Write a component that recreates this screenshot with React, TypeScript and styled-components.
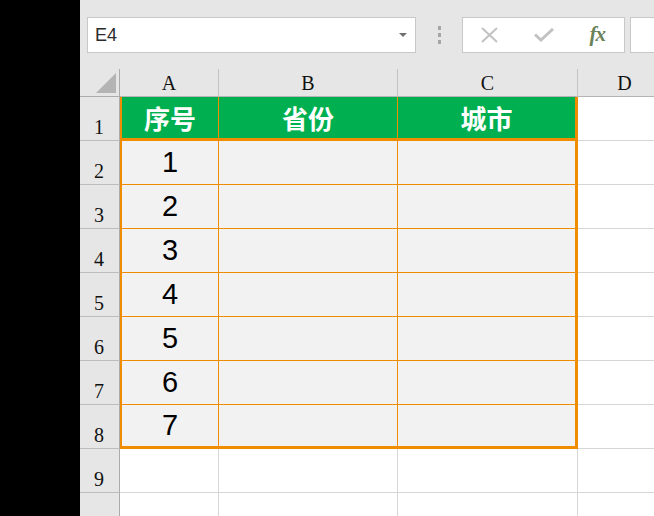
import React from "react";
import styled, { createGlobalStyle, css } from "styled-components";

const ORANGE = "#ef8c00";
const GRID = "#d6d6d6";
const HEAD_BG = "#e6e6e6";

const GlobalStyle = createGlobalStyle`
  html, body {
    margin: 0;
    padding: 0;
    background: #000;
  }
  body {
    width: 654px;
    height: 516px;
    overflow: hidden;
    font-family: "Liberation Sans", Arial, sans-serif;
  }
`;

const PageEl = styled.div`
  display: flex;
  width: 654px;
  height: 516px;
  overflow: hidden;
`;

const SideEl = styled.div`
  width: 80px;
  flex-shrink: 0;
  background: #000;
`;

const MainEl = styled.div`
  flex: 1;
  display: flex;
  flex-direction: column;
  background: #fff;
  overflow: hidden;
`;

const ToolbarEl = styled.div`
  height: 69px;
  flex-shrink: 0;
  box-sizing: border-box;
  padding: 17px 0 0 7px;
  background: ${HEAD_BG};
  display: flex;
  align-items: flex-start;
  gap: 0;
`;

const BoxEl = styled.div<{ $width: number; $gap?: number }>`
  width: ${(p) => p.$width}px;
  height: 36px;
  margin-left: ${(p) => p.$gap ?? 0}px;
  box-sizing: border-box;
  flex-shrink: 0;
  border: 1px solid #c8c8c8;
  background: #fff;
  display: flex;
  align-items: center;
`;

const NameTextEl = styled.span`
  flex: 1;
  padding-left: 7px;
  font-size: 18px;
  color: #2b2b2b;
`;

const ArrowEl = styled.span`
  width: 0;
  height: 0;
  margin-right: 8px;
  border-left: 4px solid transparent;
  border-right: 4px solid transparent;
  border-top: 4px solid #707070;
`;

const DotsEl = styled.div`
  width: 46px;
  height: 36px;
  flex-shrink: 0;
  display: flex;
  flex-direction: column;
  align-items: center;
  justify-content: center;
  gap: 3px;
`;

const DotEl = styled.span`
  width: 3px;
  height: 4px;
  background: #a6a6a6;
`;

const IconSlotEl = styled.span`
  flex: 1;
  display: flex;
  justify-content: center;
  align-items: center;
`;

const FxEl = styled.span`
  font-family: "Liberation Serif", "Times New Roman", serif;
  font-style: italic;
  font-weight: bold;
  font-size: 21px;
  color: #6a8258;
  letter-spacing: -1px;
  margin-top: -2px;
`;

const SheetEl = styled.div`
  display: grid;
  grid-template-columns: 40px 99px 179px 180px 94px;
  grid-auto-rows: 44px;
  grid-template-rows: 28px;
`;

type CellKind = "corner" | "colHead" | "rowHead" | "title" | "data" | "empty";

const CellEl = styled.div<{
  $kind: CellKind;
  $first?: boolean;
  $last?: boolean;
  $bottom?: boolean;
}>`
  box-sizing: border-box;
  display: flex;
  justify-content: center;
  align-items: center;
  overflow: hidden;
  border-right: 1px solid ${GRID};
  border-bottom: 1px solid ${GRID};

  ${(p) =>
    (p.$kind === "corner" || p.$kind === "colHead" || p.$kind === "rowHead") &&
    css`
      background: ${HEAD_BG};
      font-family: "Liberation Serif", "Times New Roman", serif;
      font-size: 20px;
      color: #111;
      border-right-color: #c4c4c4;
      border-bottom-color: #b4b4b4;
    `}

  ${(p) =>
    p.$kind === "colHead" &&
    css`
      padding-top: 2px;
    `}

  ${(p) =>
    p.$kind === "corner" &&
    css`
      justify-content: flex-end;
      align-items: flex-end;
      padding: 0 3px 3px 0;
      border-right-color: #ababab;
      border-bottom-color: #ababab;
    `}

  ${(p) =>
    p.$kind === "rowHead" &&
    css`
      align-items: flex-end;
      padding: 0 1px 3px 0;
      line-height: 1;
      border-right-color: #ababab;
      border-bottom-color: #bdbdbd;
    `}

  ${(p) =>
    p.$kind === "title" &&
    css`
      background: #00b050;
      color: #fff;
      font-family: "Noto Sans CJK SC", "Noto Sans", sans-serif;
      font-weight: bold;
      font-size: 26px;
      border-right-color: ${ORANGE};
      border-bottom: 3px solid ${ORANGE};
    `}

  ${(p) =>
    p.$kind === "data" &&
    css`
      background: #f2f2f2;
      color: #000;
      font-family: "Liberation Sans", Arial, sans-serif;
      font-size: 29px;
      border-right-color: ${ORANGE};
      border-bottom-color: ${ORANGE};
    `}

  ${(p) =>
    p.$first &&
    css`
      border-left: 2px solid ${ORANGE};
    `}

  ${(p) =>
    p.$last &&
    css`
      border-right: 3px solid ${ORANGE};
    `}

  ${(p) =>
    p.$bottom &&
    css`
      border-bottom: 3px solid ${ORANGE};
    `}
`;

const CloseIcon = () => (
  <svg width="17" height="16" viewBox="0 0 17 16">
    <path d="M1 1 L16 15 M16 1 L1 15" stroke="#c2c2c2" strokeWidth="2" fill="none" />
  </svg>
);

const CheckIcon = () => (
  <svg width="20" height="14" viewBox="0 0 20 14">
    <path d="M1 6.5 L7 12 L19 1" stroke="#c2c2c2" strokeWidth="3" fill="none" />
  </svg>
);

const CornerIcon = () => (
  <svg width="20" height="20" viewBox="0 0 20 20">
    <polygon points="20,0 20,20 0,20" fill="#b4b4b4" />
  </svg>
);

const titles = ["序号", "省份", "城市"];
const dataRows = [1, 2, 3, 4, 5, 6, 7];

export default function App() {
  return (
    <>
      <GlobalStyle />
      <PageEl>
        <SideEl />
        <MainEl>
          <ToolbarEl>
            <BoxEl $width={329}>
              <NameTextEl>E4</NameTextEl>
              <ArrowEl />
            </BoxEl>
            <DotsEl>
              <DotEl />
              <DotEl />
              <DotEl />
            </DotsEl>
            <BoxEl $width={163}>
              <IconSlotEl>
                <CloseIcon />
              </IconSlotEl>
              <IconSlotEl>
                <CheckIcon />
              </IconSlotEl>
              <IconSlotEl>
                <FxEl>fx</FxEl>
              </IconSlotEl>
            </BoxEl>
            <BoxEl $width={60} $gap={5} />
          </ToolbarEl>

          <SheetEl>
            <CellEl $kind="corner">
              <CornerIcon />
            </CellEl>
            {["A", "B", "C", "D"].map((c) => (
              <CellEl key={c} $kind="colHead">
                {c}
              </CellEl>
            ))}

            <CellEl $kind="rowHead">1</CellEl>
            {titles.map((t, i) => (
              <CellEl key={t} $kind="title" $first={i === 0} $last={i === 2}>
                {t}
              </CellEl>
            ))}
            <CellEl $kind="empty" />

            {dataRows.map((n, r) => (
              <React.Fragment key={n}>
                <CellEl $kind="rowHead">{n + 1}</CellEl>
                <CellEl $kind="data" $first $bottom={r === dataRows.length - 1}>
                  {n}
                </CellEl>
                <CellEl $kind="data" $bottom={r === dataRows.length - 1} />
                <CellEl $kind="data" $last $bottom={r === dataRows.length - 1} />
                <CellEl $kind="empty" />
              </React.Fragment>
            ))}

            <CellEl $kind="rowHead">9</CellEl>
            <CellEl $kind="empty" />
            <CellEl $kind="empty" />
            <CellEl $kind="empty" />
            <CellEl $kind="empty" />

            <CellEl $kind="rowHead" />
            <CellEl $kind="empty" />
            <CellEl $kind="empty" />
            <CellEl $kind="empty" />
            <CellEl $kind="empty" />
          </SheetEl>
        </MainEl>
      </PageEl>
    </>
  );
}
